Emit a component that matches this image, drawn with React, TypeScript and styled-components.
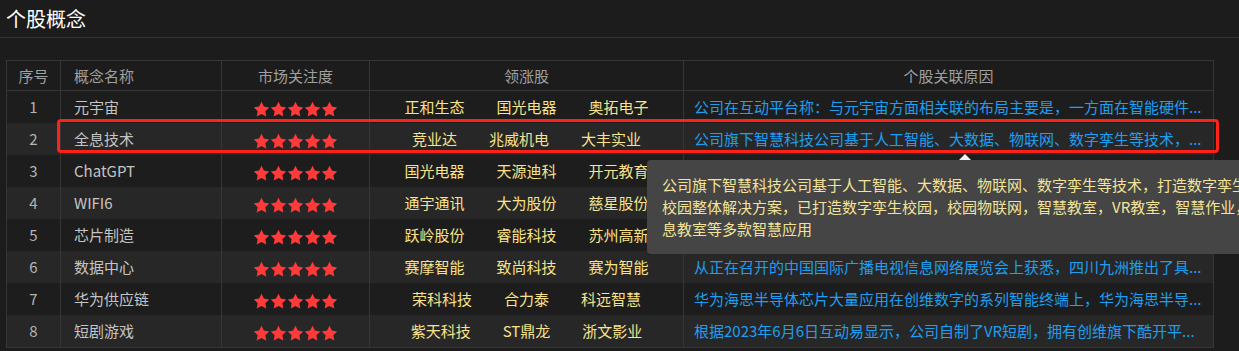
import React from "react";
import styled, { createGlobalStyle } from "styled-components";

const GlobalStyle = createGlobalStyle`
  html, body {
    margin: 0;
    padding: 0;
    background: #1c1c1c;
    overflow: hidden;
  }
  body {
    font-family: "Noto Sans CJK SC", "Microsoft YaHei", sans-serif;
  }
`;

const Page = styled.div`
  position: relative;
  width: 1239px;
  height: 351px;
  background: #1c1c1c;
  overflow: hidden;
`;

const TitleBar = styled.div`
  height: 36px;
  padding-bottom: 1px;
  border-bottom: 1px solid #333333;
  padding-left: 6px;
  display: flex;
  align-items: center;
  font-size: 20px;
  color: #ffffff;
`;

const TableWrap = styled.div`
  padding: 22px 26px 0 6px;
`;

const Table = styled.table`
  width: 1207px;
  border-collapse: collapse;
  table-layout: fixed;
  font-size: 15px;
  border: 1px solid #363636;
`;

const Col = styled.col<{ $w: number }>`
  width: ${(p) => p.$w}px;
`;

type Align = "left" | "center";

const Th = styled.th<{ $align?: Align; $pl?: number }>`
  height: 28px;
  padding: 0 0 1px ${(p) => p.$pl ?? 0}px;
  font-weight: normal;
  color: #a0a0a0;
  text-align: ${(p) => p.$align ?? "center"};
  border: 1px solid #363636;
  white-space: nowrap;
`;

const Tr = styled.tr<{ $even: boolean }>`
  background: ${(p) => (p.$even ? "#272727" : "#1d1d1d")};
`;

const Td = styled.td<{ $align?: Align; $pl?: number }>`
  height: 30px;
  padding: 0 0 2px ${(p) => p.$pl ?? 0}px;
  text-align: ${(p) => p.$align ?? "center"};
  border-left: 1px solid #363636;
  border-right: 1px solid #363636;
  white-space: nowrap;
  overflow: hidden;
  color: #c4c4c4;
`;

const Index = styled.span`
  color: #b4b4b4;
`;

const Stars = styled.div`
  display: inline-flex;
  gap: 0;
  vertical-align: middle;
  margin-top: 4px;
`;

const Leaders = styled.div`
  display: flex;
  justify-content: center;
`;

const Leader = styled.span`
  margin: 0 16px;
  color: #f8e38c;
`;

const Reason = styled.div`
  color: #1f9ff0;
  overflow: hidden;
  text-overflow: ellipsis;
  white-space: nowrap;
  padding-right: 10px;
`;

const Highlight = styled.div`
  position: absolute;
  left: 57px;
  top: 119px;
  width: 1162px;
  height: 34px;
  box-sizing: border-box;
  border: 3px solid #ff2218;
  border-radius: 4px;
  pointer-events: none;
`;

const Tooltip = styled.div`
  position: absolute;
  left: 647px;
  top: 160px;
  padding: 14px 20px 14px 15px;
  background: #454545;
  border-radius: 4px;
  font-size: 15px;
  line-height: 22px;
  color: #f3e39a;
  &::before {
    content: "";
    position: absolute;
    left: 312px;
    top: -6px;
    border-left: 6px solid transparent;
    border-right: 6px solid transparent;
    border-bottom: 6px solid #f2f2f2;
  }
`;

const TipLine = styled.div`
  white-space: nowrap;
`;

const Star = () => (
  <svg width="17" height="17" viewBox="1 1.5 22 21">
    <polygon
      points="12,2 15.09,8.26 22,9.27 17,14.14 18.18,21.02 12,17.77 5.82,21.02 7,14.14 2,9.27 8.91,8.26"
      fill="#ff3a3a"
    />
  </svg>
);

const rows = [
  {
    name: "元宇宙",
    leaders: ["正和生态", "国光电器", "奥拓电子"],
    reason: "公司在互动平台称：与元宇宙方面相关联的布局主要是，一方面在智能硬件...",
  },
  {
    name: "全息技术",
    leaders: ["竞业达", "兆威机电", "大丰实业"],
    reason: "公司旗下智慧科技公司基于人工智能、大数据、物联网、数字孪生等技术，...",
  },
  {
    name: "ChatGPT",
    leaders: ["国光电器", "天源迪科", "开元教育"],
    reason: "公司在互动平台表示，公司音箱产品可接入AI大模型，实现智能语音交互功...",
  },
  {
    name: "WIFI6",
    leaders: ["通宇通讯", "大为股份", "慈星股份"],
    reason: "公司WIFI6相关产品已实现批量出货，主要应用于运营商及企业级网络市场...",
  },
  {
    name: "芯片制造",
    leaders: ["跃岭股份", "睿能科技", "苏州高新"],
    reason: "公司拟通过收购方式切入半导体芯片制造领域，目前相关事项正在有序推进...",
  },
  {
    name: "数据中心",
    leaders: ["赛摩智能", "致尚科技", "赛为智能"],
    reason: "从正在召开的中国国际广播电视信息网络展览会上获悉，四川九洲推出了具...",
  },
  {
    name: "华为供应链",
    leaders: ["荣科科技", "合力泰", "科远智慧"],
    reason: "华为海思半导体芯片大量应用在创维数字的系列智能终端上，华为海思半导...",
  },
  {
    name: "短剧游戏",
    leaders: ["紫天科技", "ST鼎龙", "浙文影业"],
    reason: "根据2023年6月6日互动易显示，公司自制了VR短剧，拥有创维旗下酷开平...",
  },
];

const tipLines = [
  "公司旗下智慧科技公司基于人工智能、大数据、物联网、数字孪生等技术，打造数字孪生智慧",
  "校园整体解决方案，已打造数字孪生校园，校园物联网，智慧教室，VR教室，智慧作业，智慧信",
  "息教室等多款智慧应用",
];

export default function App() {
  return (
    <Page>
      <GlobalStyle />
      <TitleBar>个股概念</TitleBar>
      <TableWrap>
        <Table>
          <colgroup>
            <Col $w={54} />
            <Col $w={161} />
            <Col $w={148} />
            <Col $w={314} />
            <Col $w={530} />
          </colgroup>
          <thead>
            <tr>
              <Th>序号</Th>
              <Th $align="left" $pl={13}>
                概念名称
              </Th>
              <Th>市场关注度</Th>
              <Th>领涨股</Th>
              <Th>个股关联原因</Th>
            </tr>
          </thead>
          <tbody>
            {rows.map((r, i) => (
              <Tr key={r.name} $even={i % 2 === 1}>
                <Td>
                  <Index>{i + 1}</Index>
                </Td>
                <Td $align="left" $pl={13}>
                  {r.name}
                </Td>
                <Td>
                  <Stars>
                    {[0, 1, 2, 3, 4].map((s) => (
                      <Star key={s} />
                    ))}
                  </Stars>
                </Td>
                <Td>
                  <Leaders>
                    {r.leaders.map((l) => (
                      <Leader key={l}>{l}</Leader>
                    ))}
                  </Leaders>
                </Td>
                <Td $align="left" $pl={10}>
                  <Reason>{r.reason}</Reason>
                </Td>
              </Tr>
            ))}
          </tbody>
        </Table>
      </TableWrap>
      <Highlight />
      <Tooltip>
        {tipLines.map((t) => (
          <TipLine key={t}>{t}</TipLine>
        ))}
      </Tooltip>
    </Page>
  );
}
